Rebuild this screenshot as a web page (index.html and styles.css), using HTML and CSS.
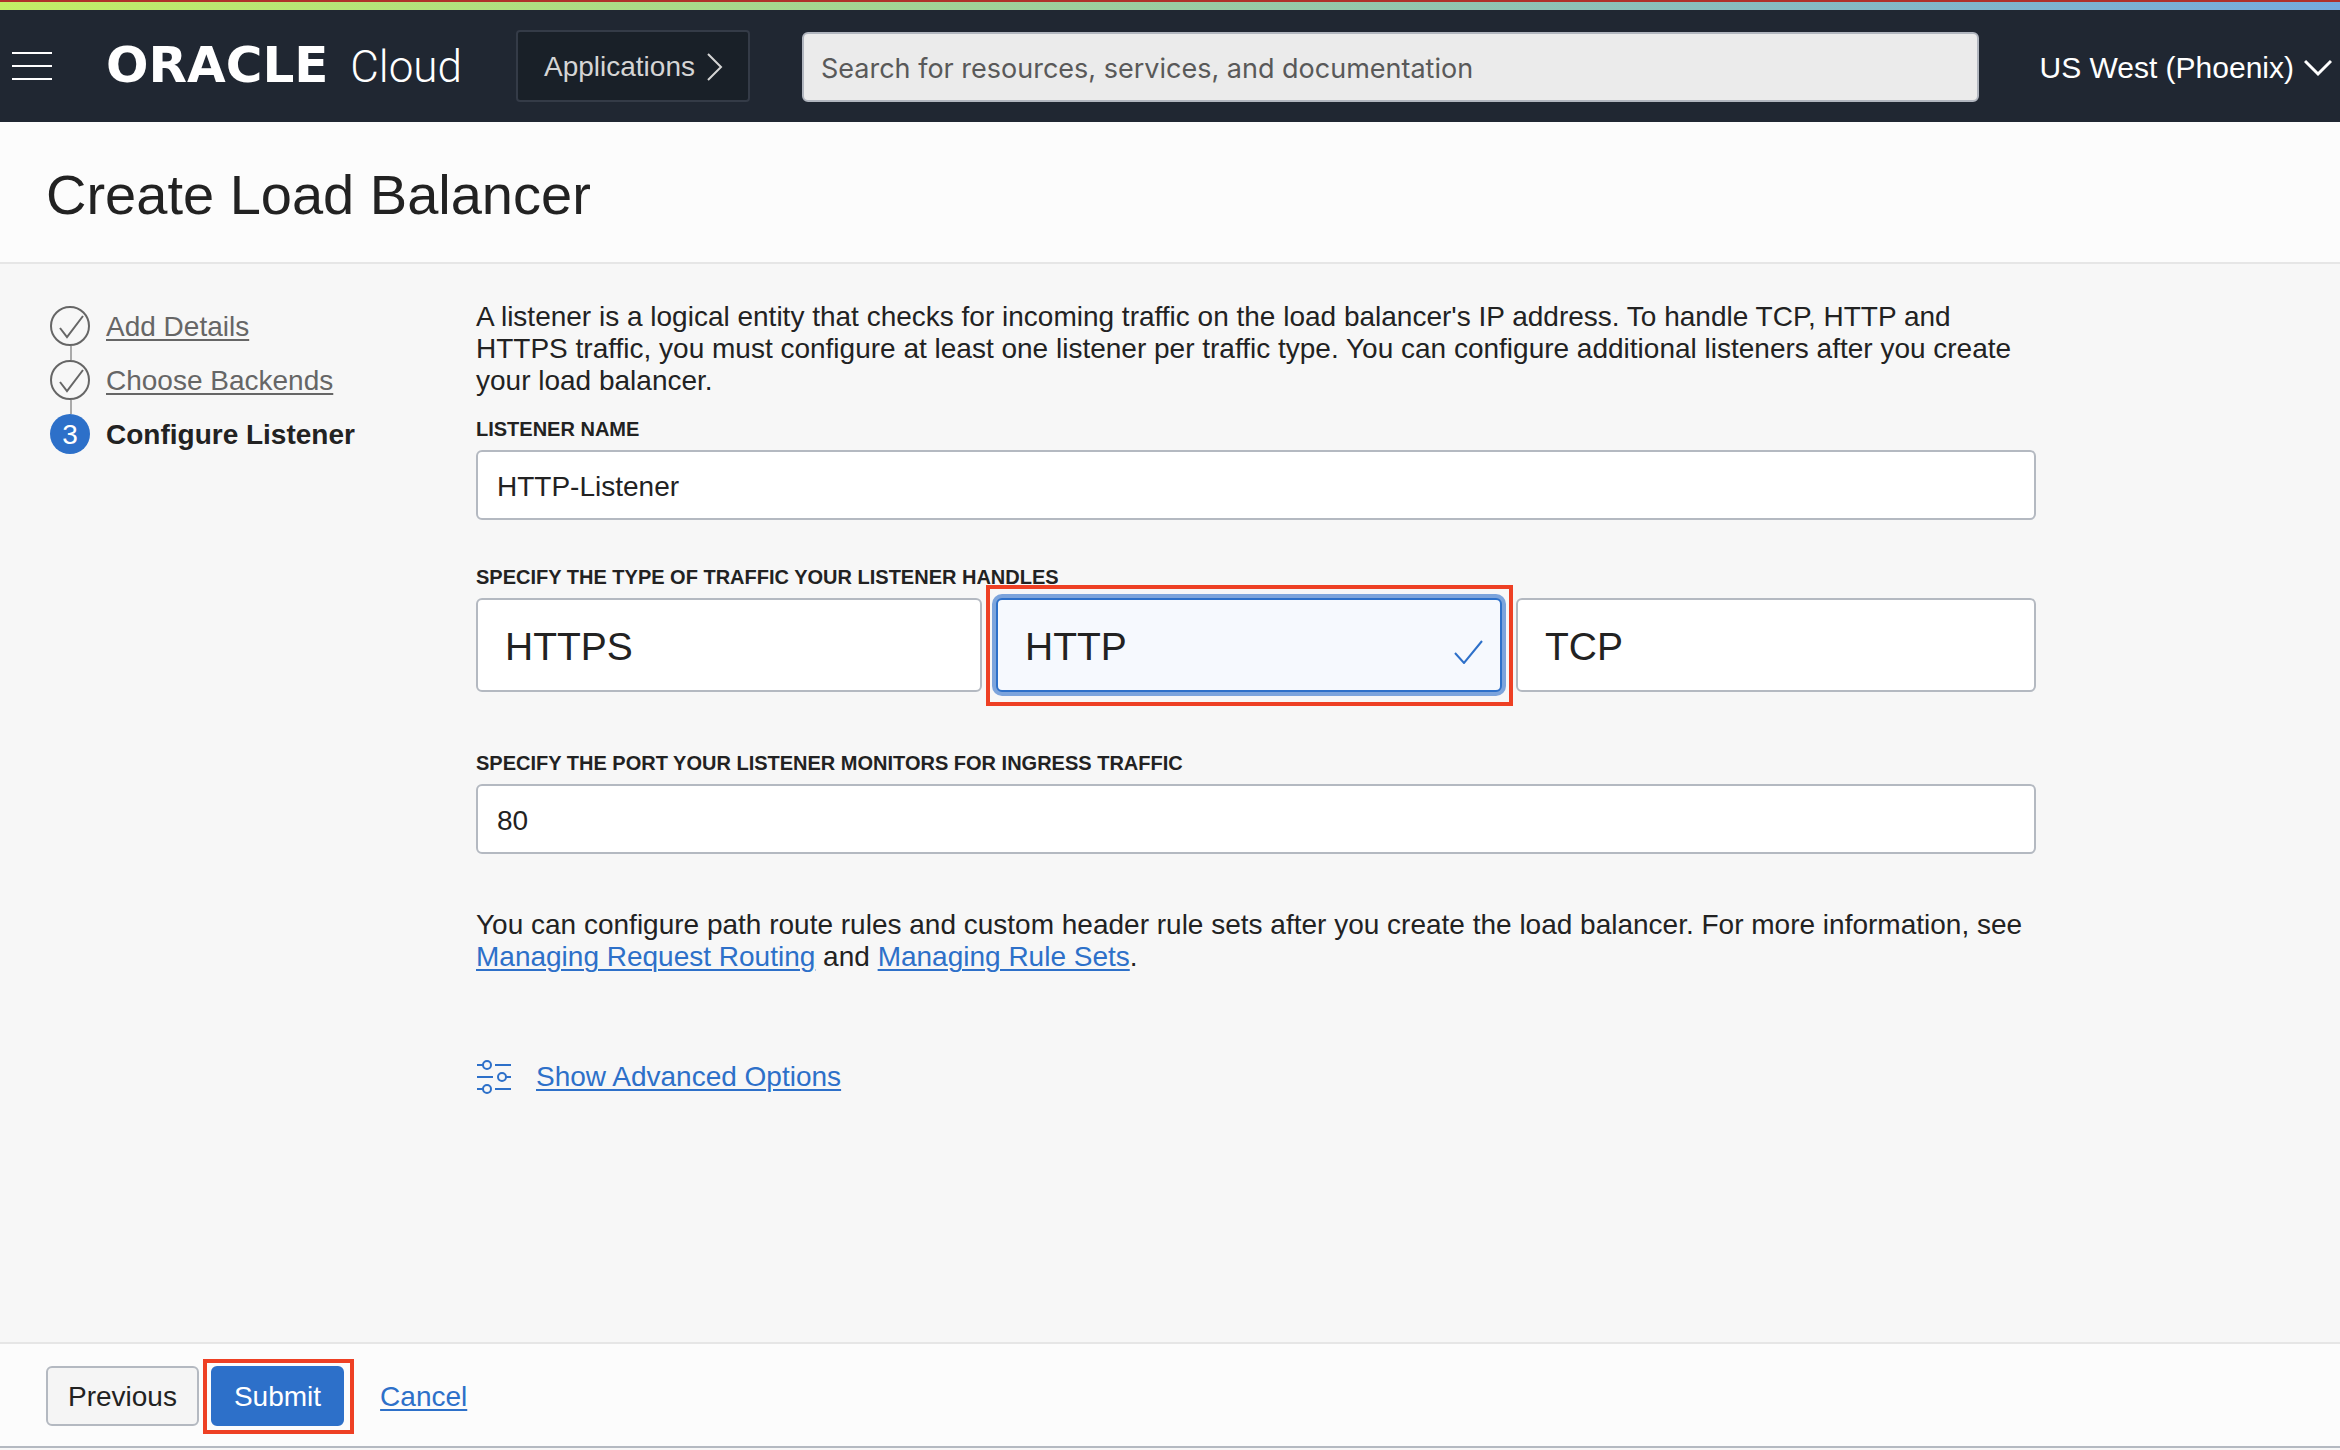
FILE: index.html
```html
<!DOCTYPE html>
<html lang="en">
<head>
<meta charset="utf-8">
<title>Create Load Balancer</title>
<link rel="stylesheet" href="styles.css">
</head>
<body>
<header class="topbar">
  <button class="menu" type="button" aria-label="Menu">
    <svg width="40" height="28" viewBox="0 0 40 28" fill="none" stroke="currentColor" stroke-width="2"><path d="M0 1h40M0 14h40M0 27h40"/></svg>
  </button>
  <a class="brand" href="#"><span class="brand-name">ORACLE</span><span class="brand-product">Cloud</span></a>
  <button class="apps" type="button">Applications
    <svg width="16" height="28" viewBox="0 0 16 28" fill="none" stroke="currentColor" stroke-width="2"><path d="M1 1l13 13L1 27"/></svg>
  </button>
  <input class="search" type="search" aria-label="Search" placeholder="Search for resources, services, and documentation">
  <button class="region" type="button">US West (Phoenix)
    <svg width="28" height="18" viewBox="0 0 28 18" fill="none" stroke="currentColor" stroke-width="3"><path d="M1 2l13 13L27 2"/></svg>
  </button>
</header>

<div class="title-bar"><h1>Create Load Balancer</h1></div>

<div class="body">
  <nav class="steps" aria-label="Steps">
    <ol>
      <li>
        <svg class="step-icon" viewBox="0 0 40 40" fill="none" stroke="currentColor" stroke-width="2"><circle cx="20" cy="20" r="19"/><path d="M10 22l7 9 16-21"/></svg>
        <a class="step-label" href="#">Add Details</a>
      </li>
      <li>
        <svg class="step-icon" viewBox="0 0 40 40" fill="none" stroke="currentColor" stroke-width="2"><circle cx="20" cy="20" r="19"/><path d="M10 22l7 9 16-21"/></svg>
        <a class="step-label" href="#">Choose Backends</a>
      </li>
      <li class="current" aria-current="step">
        <span class="step-icon step-number">3</span>
        <span class="step-label">Configure Listener</span>
      </li>
    </ol>
  </nav>

  <main>
    <form id="listener">
      <p>A listener is a logical entity that checks for incoming traffic on the load balancer's IP address. To handle TCP, HTTP and HTTPS traffic, you must configure at least one listener per traffic type. You can configure additional listeners after you create your load balancer.</p>

      <div class="field">
        <label class="caption" for="name">LISTENER NAME</label>
        <input class="text" id="name" type="text" value="HTTP-Listener">
      </div>

      <fieldset class="field">
        <legend class="caption">SPECIFY THE TYPE OF TRAFFIC YOUR LISTENER HANDLES</legend>
        <div class="choices">
          <label class="choice"><input type="radio" name="traffic" value="https">HTTPS</label>
          <label class="choice highlight"><input type="radio" name="traffic" value="http" checked>HTTP
            <svg width="30" height="24" viewBox="0 0 30 24" fill="none" stroke="currentColor" stroke-width="2"><path d="M1 13l9 10L28 1"/></svg>
          </label>
          <label class="choice"><input type="radio" name="traffic" value="tcp">TCP</label>
        </div>
      </fieldset>

      <div class="field">
        <label class="caption" for="port">SPECIFY THE PORT YOUR LISTENER MONITORS FOR INGRESS TRAFFIC</label>
        <input class="text" id="port" type="text" inputmode="numeric" value="80">
      </div>

      <p class="note">You can configure path route rules and custom header rule sets after you create the load balancer. For more information, see <a href="#">Managing Request Routing</a> and <a href="#">Managing Rule Sets</a>.</p>

      <div class="advanced">
        <svg width="36" height="36" viewBox="0 0 36 36" fill="none" stroke="currentColor" stroke-width="2"><path d="M1 6h6M19 6h16M1 18h16M30 18h5M1 30h6M19 30h16"/><circle cx="11" cy="6" r="4"/><circle cx="26" cy="18" r="4"/><circle cx="11" cy="30" r="4"/></svg>
        <a href="#">Show Advanced Options</a>
      </div>
    </form>
  </main>
</div>

<footer class="actions">
  <button class="btn" type="button">Previous</button>
  <button class="btn primary highlight" type="submit" form="listener">Submit</button>
  <a href="#">Cancel</a>
</footer>
</body>
</html>
```
FILE: styles.css
```css
* { box-sizing: border-box; }

body {
  margin: 0;
  min-height: 100vh;
  display: flex;
  flex-direction: column;
  background: #f7f7f7;
  color: #222;
  font: 28px/32px "Liberation Sans", Arial, sans-serif;
}

button, input { font: inherit; color: inherit; }
button { cursor: pointer; }
h1, p, ol, fieldset, legend { margin: 0; padding: 0; border: 0; }
svg { flex: none; }
a { color: #2d70c9; text-decoration-thickness: 2px; text-underline-offset: 3px; }

/* Top bar */
.topbar {
  display: flex;
  align-items: center;
  height: 122px;
  padding: 10px 8px 0 12px;
  color: #fff;
  background:
    linear-gradient(#b0302a, #b0302a) 0 0 / 100% 2px no-repeat,
    linear-gradient(90deg, #c3ee66, #a6d78e 33%, #8fc2b4 66%, #75aade) 0 0 / 100% 10px no-repeat,
    #202732;
}

.menu, .region { padding: 0; border: 0; background: none; }
.menu { display: flex; margin-right: 54px; }

.brand {
  display: flex;
  align-items: baseline;
  justify-content: space-between;
  width: 356px;
  margin-right: 54px;
  color: #fff;
  line-height: 48px;
  text-decoration: none;
}
.brand-name { font-family: "DejaVu Sans", sans-serif; font-size: 50px; font-weight: 700; }
.brand-product { font-family: Roboto, sans-serif; font-size: 44px; font-weight: 300; }

.apps {
  display: flex;
  align-items: center;
  gap: 12px;
  flex: none;
  height: 72px;
  padding: 2px 25px 0 26px;
  border: 2px solid #343b47;
  border-radius: 4px;
  background: #192028;
  color: #d5d5d5;
}

.search {
  flex: 1;
  min-width: 0;
  height: 70px;
  margin: 2px 60px 0 52px;
  padding: 3px 17px 0;
  border: 2px solid #b1b6bf;
  border-radius: 6px;
  background: #ebebeb;
  font-family: Inter, sans-serif;
  font-size: 27px;
  appearance: none;
}
.search::placeholder { color: #595959; opacity: 1; }

.region {
  display: flex;
  align-items: center;
  gap: 10px;
  flex: none;
  padding-top: 3px;
  font-size: 30px;
}

/* Page title */
.title-bar {
  padding: 41px 46px 35px;
  border-bottom: 2px solid #e6e6e6;
  background: #fcfcfc;
}
h1 { font-size: 56px; font-weight: 400; line-height: 64px; }

/* Body */
.body { flex: 1; display: flex; padding: 37px 50px 0; }

.steps { flex: none; width: 426px; padding-top: 5px; }
.steps ol { display: grid; gap: 14px; list-style: none; color: #666; }
.steps li { position: relative; display: flex; align-items: center; gap: 16px; }
.steps li a { color: inherit; }
.steps li:not(.current)::after {
  content: "";
  position: absolute;
  top: 100%;
  left: 20px;
  width: 2px;
  height: 14px;
  background: #aaa;
}
.steps .current { color: #222; font-weight: 700; }
.step-label { padding-top: 2px; }
.step-icon { flex: none; width: 40px; height: 40px; }
.step-number {
  border-radius: 50%;
  background: #2d70c9;
  color: #fff;
  font-weight: 400;
  line-height: 42px;
  text-align: center;
}

main { flex: 1; max-width: 1560px; }

.field { margin-bottom: 44px; }
.field:first-of-type { margin-top: 19px; }
.caption { display: block; margin-bottom: 8px; font-size: 20px; font-weight: 700; line-height: 26px; }

.text {
  display: block;
  width: 100%;
  height: 70px;
  padding: 3px 19px 0;
  border: 2px solid #b4b9c1;
  border-radius: 6px;
  background: #fff;
}

.choices { display: grid; grid-template-columns: repeat(3, 1fr); margin-bottom: 58px; }
.choice {
  display: flex;
  align-items: center;
  justify-content: space-between;
  height: 94px;
  margin-right: 14px;
  padding: 3px 16px 0 27px;
  border: 2px solid #b4b9c1;
  border-radius: 6px;
  background: #fff;
  font-size: 39px;
}
.choice:last-child { margin-right: 0; }
.choice input { position: absolute; appearance: none; margin: 0; }
.choice:has(:checked) {
  border-color: #2d70c9;
  background: #f6f9fe;
  box-shadow: 0 0 0 4px #7ca4dc;
}
.choice svg { margin-top: 10px; color: #2d70c9; }

/* Red call-out frame */
.highlight { position: relative; }
.highlight::after {
  content: "";
  position: absolute;
  inset: -15px -13px -16px -12px;
  border: 4px solid #ee4024;
  pointer-events: none;
}

fieldset.field { margin-bottom: 0; }
.note { margin-top: 55px; }
.advanced { display: flex; align-items: center; gap: 24px; margin-top: 86px; color: #2d70c9; }

/* Footer */
.actions {
  display: flex;
  align-items: center;
  gap: 12px;
  height: 106px;
  margin-bottom: 2px;
  padding: 2px 46px 0;
  border-top: 2px solid #e6e6e6;
  border-bottom: 2px solid #b4b9c1;
  background: #fcfcfc;
}
.btn {
  height: 60px;
  padding: 2px 20px 0;
  border: 2px solid #b4b9c1;
  border-radius: 6px;
  background: #f5f5f5;
}
.btn.primary { padding: 2px 21px 0; border-color: #2d70c9; background: #2d70c9; color: #fff; }
.btn.highlight::after { inset: -9px -12px -10px -10px; }
.actions a { margin-left: 24px; padding-top: 2px; }
```
